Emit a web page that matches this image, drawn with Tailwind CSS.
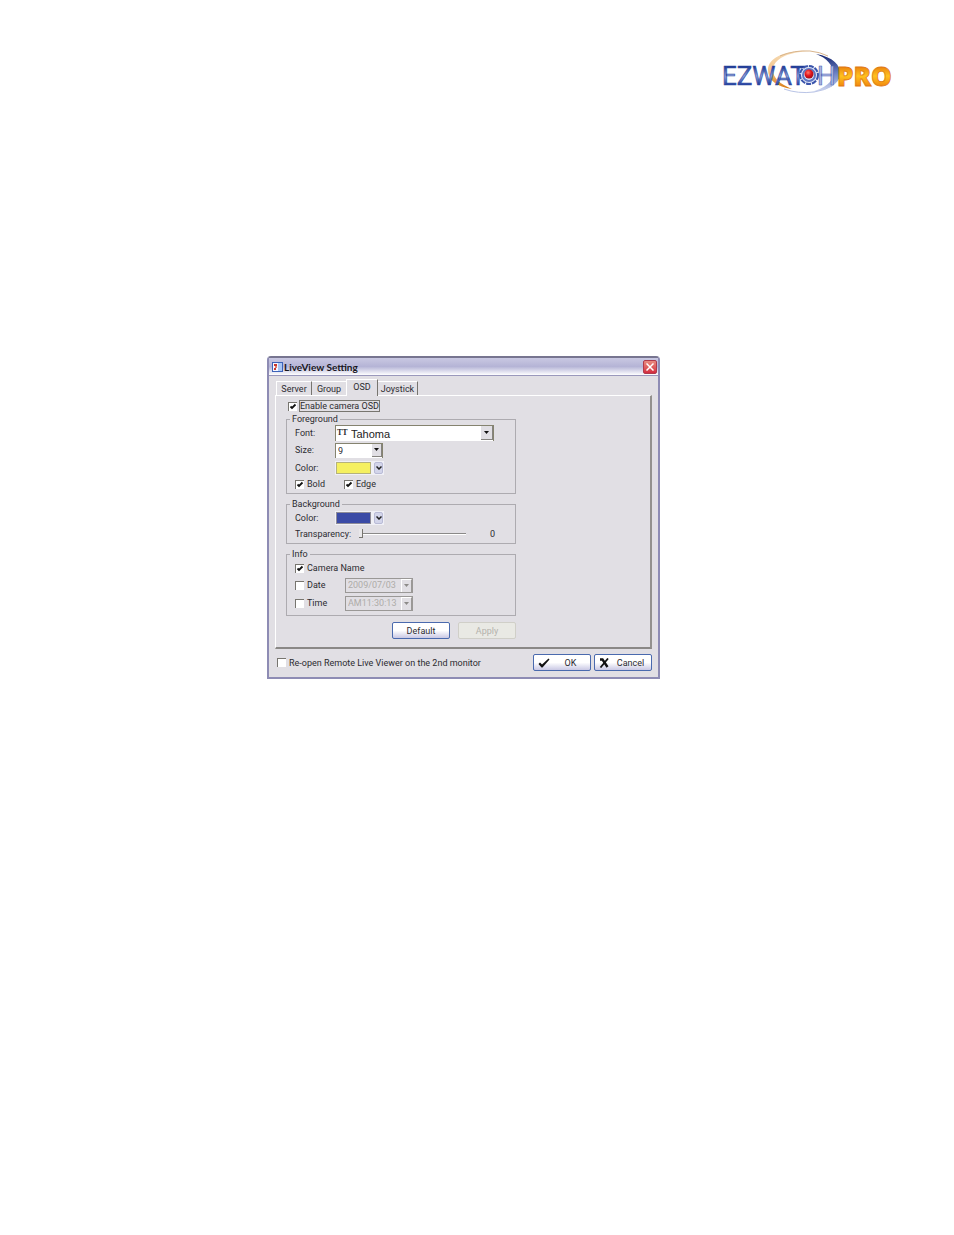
<!DOCTYPE html>
<html lang="en">
<head>
  <meta charset="UTF-8" />
  <meta name="viewport" content="width=device-width, initial-scale=1.0" />
  <title>LiveView Setting | EZWatch Pro</title>
  <script src="https://cdn.jsdelivr.net/npm/@tailwindcss/browser@4"></script>
</head>
<body class="bg-white text-[#2c2b30] font-['Roboto',Arial,sans-serif] text-[9px] leading-3">

  <!-- Logo -->
  <header class="flex justify-end pt-12 pr-[60px]">
    <svg class="w-[172px] h-12" viewBox="0 0 172 48" role="img" aria-label="EZWatch Pro">
      <defs>
        <linearGradient id="blue" x1="0" y1="0" x2="0" y2="1">
          <stop offset="0.2" stop-color="#1f3a94" /><stop offset="0.5" stop-color="#8fa4dc" /><stop offset="0.8" stop-color="#2440a0" />
        </linearGradient>
        <linearGradient id="orange" x1="0" y1="0" x2="0" y2="1">
          <stop offset="0.2" stop-color="#e8780c" /><stop offset="0.5" stop-color="#ffc21e" /><stop offset="0.85" stop-color="#ee7a0a" />
        </linearGradient>
        <linearGradient id="swooshLeft" x1="0" y1="0" x2="0" y2="1">
          <stop offset="0" stop-color="#f6dcb8" /><stop offset="0.5" stop-color="#f3c68c" /><stop offset="1" stop-color="#d97a10" />
        </linearGradient>
        <linearGradient id="swooshRight" x1="0" y1="0" x2="0" y2="1">
          <stop offset="0" stop-color="#14246e" /><stop offset="0.5" stop-color="#6b80c4" /><stop offset="1" stop-color="#d5dcf2" />
        </linearGradient>
        <radialGradient id="eye" cx="0.4" cy="0.35" r="0.7">
          <stop offset="0" stop-color="#ff7a6a" /><stop offset="0.5" stop-color="#e3141c" /><stop offset="1" stop-color="#980d16" />
        </radialGradient>
      </defs>
      <path d="M88 3 C64 2 46 9 46 22 C46 32 55 39 70 41 C58 36 51 30 51 22 C51 11 66 4 88 3 Z" fill="url(#swooshLeft)" />
      <path d="M58 8 Q72 2 88 3 Q98 4 106 8" fill="none" stroke="#d9b58c" stroke-width="1" />
      <path d="M94 6 C111 9 119 17 118 27 C117 36 107 42 89 44 C103 40 111 34 111 26 C111 17 105 10 94 6 Z" fill="url(#swooshRight)" />
      <path d="M62 41 Q76 46 92 44 Q104 42 110 38" fill="none" stroke="#b9c4e6" stroke-width="1" />
      <text x="0" y="37" font-family="Roboto, sans-serif" font-size="26" fill="url(#blue)" stroke="#2d479f" stroke-width="0.6">EZWAT</text>
      <text x="95" y="37" font-family="Roboto, sans-serif" font-size="26" fill="#a9b7e2" stroke="#4a62b2" stroke-width="0.6">H</text>
      <text x="115" y="38" font-family="Open Sans, sans-serif" font-weight="800" font-size="26" fill="url(#orange)" stroke="#df7a12" stroke-width="0.8">PRO</text>
      <circle cx="87" cy="27" r="9" fill="#dfe5f6" stroke="#3a54ab" stroke-width="2" stroke-dasharray="5 1" />
      <circle cx="87" cy="27" r="6" fill="none" stroke="#5f77c2" stroke-width="2" />
      <circle cx="87" cy="26" r="4.5" fill="url(#eye)" />
    </svg>
  </header>

  <main class="pt-[260px] pr-[27px] pb-16">
    <section class="mx-auto max-w-[393px] bg-[#e1dfe4] border-2 border-[#8e8cb4] border-t-[#777590] rounded-t-sm">

      <!-- Title bar -->
      <div class="flex items-center h-[18px] pl-[3px] pr-px bg-linear-to-b from-[#c9c8e2] via-[#b5b4d6] to-white border-b border-[#9a98bc]">
        <svg class="w-[11px] h-[10px]" viewBox="0 0 11 10">
          <rect x="0.5" y="0.5" width="10" height="9" fill="#f4f6ff" stroke="#3c62b8" />
          <rect x="6" y="1" width="4" height="8" fill="#a9c6f4" />
          <rect x="2" y="2" width="3" height="2" fill="#c8382c" />
          <rect x="3" y="4" width="2" height="2" fill="#e07a68" />
          <rect x="2" y="6" width="2" height="2" fill="#c8382c" />
        </svg>
        <h1 class="flex-1 pl-px font-['Lato',sans-serif] font-bold text-[10px] text-[#17161c]">LiveView Setting</h1>
        <button type="button" aria-label="Close" class="grid place-items-center w-[14px] h-[14px] rounded-xs border border-[#b03a4c] bg-linear-to-b from-[#e88a80] to-[#d3283f]">
          <svg class="w-2 h-2" viewBox="0 0 8 8"><path d="M0.5 0.5L7.5 7.5M7.5 0.5L0.5 7.5" stroke="#fff" stroke-width="1.5" /></svg>
        </button>
      </div>

      <div class="px-[6px] pt-[3px] pb-[6px]">
        <!-- Tabs -->
        <div role="tablist" class="flex items-end pl-px">
          <button type="button" role="tab" class="h-[14px] w-9 border-t border-l border-t-white border-l-white border-r border-r-[#77756f]">Server</button>
          <button type="button" role="tab" class="h-[14px] w-[34px] border-t border-t-white">Group</button>
          <button type="button" role="tab" aria-selected="true" class="-mb-px h-[17px] w-8 pb-[3px] bg-[#e1dfe4] border-t border-l border-t-white border-l-white border-r border-r-[#77756f]">OSD</button>
          <button type="button" role="tab" class="h-[14px] w-10 border-t border-t-white border-r border-r-[#77756f]">Joystick</button>
        </div>

        <!-- OSD panel -->
        <form id="osdForm" class="border-t border-l border-white border-r-2 border-b-2 border-r-[#93918e] border-b-[#8a8886] pl-[10px] pt-1 pb-2">
          <div class="w-[230px]">
            <label class="flex items-center gap-[2px] pl-[2px]">
              <span class="grid">
                <input type="checkbox" checked class="peer col-start-1 row-start-1 appearance-none w-[9px] h-[9px] bg-white border-t border-l border-[#77756f]" />
                <svg class="hidden peer-checked:block col-start-1 row-start-1 w-[9px] h-[9px]" viewBox="0 0 9 9"><path d="M2.5 4.5L4 6L7.5 2.5" fill="none" stroke="#111" stroke-width="1.8" /></svg>
              </span>
              <span class="border border-[#77756f] leading-[10px]">Enable camera OSD</span>
            </label>

            <fieldset class="mt-px border border-[#adabb0] pl-2 pb-[2px]">
              <legend class="-ml-[5px] px-[2px]">Foreground</legend>
              <div class="flex items-center h-4">
                <label for="font" class="w-10">Font:</label>
                <span class="grid items-center">
                  <select id="font" class="col-start-1 row-start-1 appearance-none w-[159px] h-4 pl-[15px] bg-white border-t border-l border-r border-[#85836f] font-['Liberation_Sans',sans-serif] text-[11px] leading-[14px] text-[#222]">
                    <option>Tahoma</option>
                  </select>
                  <span class="col-start-1 row-start-1 pl-[2px] pointer-events-none font-['Liberation_Serif',serif] font-bold text-[8px] leading-3" aria-hidden="true">TT</span>
                  <span class="col-start-1 row-start-1 justify-self-end grid place-items-center w-3 h-[14px] mr-px pointer-events-none bg-[#e1dfe4] border-r border-b border-[#85837f]">
                    <svg class="w-[5px] h-[3px]" viewBox="0 0 5 3"><path d="M0 0H5L2.5 3Z" fill="#111" /></svg>
                  </span>
                </span>
              </div>
              <div class="flex items-center h-[18px]">
                <label for="size" class="w-10">Size:</label>
                <span class="grid items-center">
                  <select id="size" class="col-start-1 row-start-1 appearance-none w-12 h-[15px] pl-[2px] bg-white border-t border-l border-r border-[#85836f]">
                    <option>9</option>
                  </select>
                  <span class="col-start-1 row-start-1 justify-self-end grid place-items-center w-[10px] h-[13px] mr-px pointer-events-none bg-[#e1dfe4] border-r border-b border-[#85837f]">
                    <svg class="w-[5px] h-[3px]" viewBox="0 0 5 3"><path d="M0 0H5L2.5 3Z" fill="#111" /></svg>
                  </span>
                </span>
              </div>
              <div class="flex items-center h-[18px]">
                <label for="fgColor" class="w-10">Color:</label>
                <button type="button" id="fgColor" class="flex items-center gap-[3px] p-px bg-[#f0f0f6]">
                  <span class="w-[35px] h-3 bg-[#f5f060] border border-[#b5b27c]"></span>
                  <span class="grid place-items-center w-[9px] h-3 bg-[#d3d5ea] border border-[#b9bbd6] rounded-xs">
                    <svg class="w-[6px] h-1" viewBox="0 0 6 4"><path d="M0.5 0.5L3 3L5.5 0.5" fill="none" stroke="#222" stroke-width="1.5" /></svg>
                  </span>
                </button>
              </div>
              <div class="flex items-center h-[14px]">
                <label class="flex items-center gap-[3px] w-[49px]">
                  <span class="grid">
                    <input type="checkbox" checked class="peer col-start-1 row-start-1 appearance-none w-[9px] h-[9px] bg-white border-t border-l border-[#77756f]" />
                    <svg class="hidden peer-checked:block col-start-1 row-start-1 w-[9px] h-[9px]" viewBox="0 0 9 9"><path d="M2.5 4.5L4 6L7.5 2.5" fill="none" stroke="#111" stroke-width="1.8" /></svg>
                  </span>
                  Bold
                </label>
                <label class="flex items-center gap-[3px]">
                  <span class="grid">
                    <input type="checkbox" checked class="peer col-start-1 row-start-1 appearance-none w-[9px] h-[9px] bg-white border-t border-l border-[#77756f]" />
                    <svg class="hidden peer-checked:block col-start-1 row-start-1 w-[9px] h-[9px]" viewBox="0 0 9 9"><path d="M2.5 4.5L4 6L7.5 2.5" fill="none" stroke="#111" stroke-width="1.8" /></svg>
                  </span>
                  Edge
                </label>
              </div>
            </fieldset>

            <fieldset class="mt-1 border border-[#adabb0] pl-2 pb-px">
              <legend class="-ml-[5px] px-[2px]">Background</legend>
              <div class="flex items-center h-4">
                <label for="bgColor" class="w-10">Color:</label>
                <button type="button" id="bgColor" class="flex items-center gap-[3px] p-px bg-[#f0f0f6]">
                  <span class="w-[35px] h-3 bg-[#3a4aa6] border border-[#8e8c98]"></span>
                  <span class="grid place-items-center w-[9px] h-3 bg-[#d3d5ea] border border-[#b9bbd6] rounded-xs">
                    <svg class="w-[6px] h-1" viewBox="0 0 6 4"><path d="M0.5 0.5L3 3L5.5 0.5" fill="none" stroke="#222" stroke-width="1.5" /></svg>
                  </span>
                </button>
              </div>
              <div class="flex items-center h-4">
                <label for="transparency" class="w-16">Transparency:</label>
                <input type="range" id="transparency" min="0" max="255" value="0" class="appearance-none w-[107px] h-3 bg-transparent [&::-webkit-slider-runnable-track]:h-[2px] [&::-webkit-slider-runnable-track]:bg-[#8a8988] [&::-webkit-slider-runnable-track]:border-b [&::-webkit-slider-runnable-track]:border-white [&::-webkit-slider-thumb]:appearance-none [&::-webkit-slider-thumb]:-mt-1 [&::-webkit-slider-thumb]:w-1 [&::-webkit-slider-thumb]:h-[9px] [&::-webkit-slider-thumb]:bg-[#e9e8ea] [&::-webkit-slider-thumb]:border-r [&::-webkit-slider-thumb]:border-b [&::-webkit-slider-thumb]:border-[#77756f]" />
                <output for="transparency" id="transparencyValue" class="pl-6">0</output>
              </div>
            </fieldset>

            <fieldset class="mt-1 border border-[#adabb0] pl-2 pb-[3px]">
              <legend class="-ml-[5px] px-[2px]">Info</legend>
              <label class="flex items-center gap-[3px] h-4">
                <span class="grid">
                  <input type="checkbox" checked class="peer col-start-1 row-start-1 appearance-none w-[9px] h-[9px] bg-white border-t border-l border-[#77756f]" />
                  <svg class="hidden peer-checked:block col-start-1 row-start-1 w-[9px] h-[9px]" viewBox="0 0 9 9"><path d="M2.5 4.5L4 6L7.5 2.5" fill="none" stroke="#111" stroke-width="1.8" /></svg>
                </span>
                Camera Name
              </label>
              <div class="flex items-center h-[18px]">
                <label class="flex items-center gap-[3px] w-[50px]">
                  <input type="checkbox" class="appearance-none w-[9px] h-[9px] bg-white border-t border-l border-[#77756f]" />
                  Date
                </label>
                <span class="grid items-center">
                  <select disabled aria-label="Date format" class="col-start-1 row-start-1 appearance-none w-[68px] h-[15px] pl-[2px] border border-[#9a9896] text-[#aeaca8] opacity-100">
                    <option>2009/07/03</option>
                  </select>
                  <span class="col-start-1 row-start-1 justify-self-end grid place-items-center w-[11px] h-[13px] mr-px pointer-events-none border-t border-l border-r border-t-white border-l-white border-r-[#9a9896]">
                    <svg class="w-[5px] h-[3px]" viewBox="0 0 5 3"><path d="M0 0H5L2.5 3Z" fill="#8d8b89" /></svg>
                  </span>
                </span>
              </div>
              <div class="flex items-center h-[18px]">
                <label class="flex items-center gap-[3px] w-[50px]">
                  <input type="checkbox" class="appearance-none w-[9px] h-[9px] bg-white border-t border-l border-[#77756f]" />
                  Time
                </label>
                <span class="grid items-center">
                  <select disabled aria-label="Time format" class="col-start-1 row-start-1 appearance-none w-[68px] h-[15px] pl-[2px] border border-[#9a9896] text-[#aeaca8] opacity-100">
                    <option>AM11:30:13</option>
                  </select>
                  <span class="col-start-1 row-start-1 justify-self-end grid place-items-center w-[11px] h-[13px] mr-px pointer-events-none border-t border-l border-r border-t-white border-l-white border-r-[#9a9896]">
                    <svg class="w-[5px] h-[3px]" viewBox="0 0 5 3"><path d="M0 0H5L2.5 3Z" fill="#8d8b89" /></svg>
                  </span>
                </span>
              </div>
            </fieldset>

            <div class="flex justify-end gap-2 pt-[6px]">
              <button type="reset" class="w-[58px] h-[17px] rounded-xs border border-[#4a6aae] bg-linear-to-b from-white from-50% to-[#c9c8e4]">Default</button>
              <button type="button" disabled class="w-[58px] h-[17px] rounded-xs border border-[#d0cfc8] bg-[#e9e9e4] text-[#b4b2ac]">Apply</button>
            </div>
          </div>
        </form>

        <!-- Footer -->
        <div class="flex items-center pt-[5px] pl-[2px]">
          <label class="flex flex-1 items-center gap-[3px]">
            <input type="checkbox" class="appearance-none w-[9px] h-[9px] bg-white border-t border-l border-[#77756f]" />
            Re-open Remote Live Viewer on the 2nd monitor
          </label>
          <div class="flex gap-[3px]">
            <button type="submit" form="osdForm" class="flex items-center w-[58px] h-[17px] pl-1 rounded-xs border border-[#4a6aae] bg-linear-to-b from-white from-50% to-[#c9c8e4]">
              <svg class="w-3 h-[10px]" viewBox="0 0 12 10"><path d="M0.5 6L2 4.5L4 6.5L10.5 0.5L11.5 1.5L4.5 9.5H3.5Z" fill="#111" /></svg>
              <span class="flex-1 pl-px">OK</span>
            </button>
            <button type="button" class="flex items-center w-[58px] h-[17px] pl-1 rounded-xs border border-[#4a6aae] bg-linear-to-b from-white from-50% to-[#c9c8e4]">
              <svg class="w-[10px] h-[10px]" viewBox="0 0 10 10"><path d="M1 1.5H3.5L8.5 9" fill="none" stroke="#111" stroke-width="2.4" /><path d="M9 0.5L1.5 9.5" stroke="#111" stroke-width="1.8" /></svg>
              <span class="flex-1 pl-px">Cancel</span>
            </button>
          </div>
        </div>
      </div>
    </section>
  </main>

<script>
const transparency = document.getElementById('transparency');
transparency.addEventListener('input', function() {
  document.getElementById('transparencyValue').textContent = transparency.value;
});
</script>
</body>
</html>
